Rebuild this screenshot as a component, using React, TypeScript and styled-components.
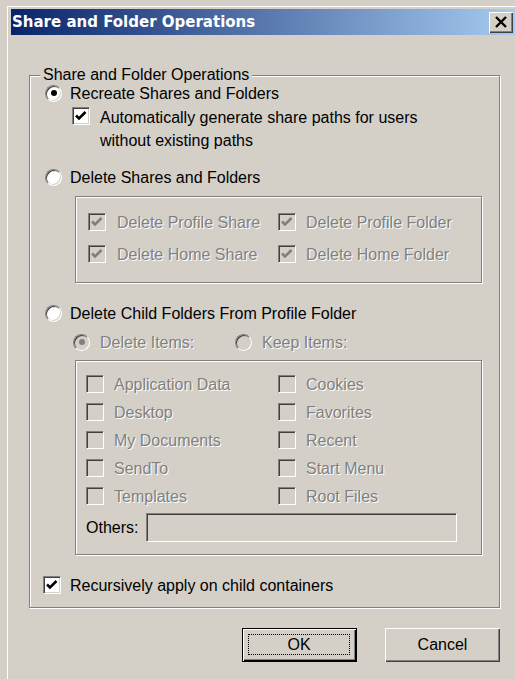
import React from "react";
import styled, { createGlobalStyle } from "styled-components";

const GlobalStyle = createGlobalStyle`
  html, body {
    margin: 0;
    padding: 0;
    background: #d4d0c8;
  }
  body {
    font-family: "Liberation Sans", Arial, sans-serif;
    font-size: 16px;
    color: #000;
  }
`;

const Window = styled.div`
  width: 515px;
  height: 679px;
  overflow: hidden;
  box-sizing: border-box;
  padding: 6px 0 0 7px;
  background: #d4d0c8;
`;

const Frame = styled.div`
  height: 100%;
  box-sizing: border-box;
  border-top: 1px solid #fff;
  border-left: 1px solid #fff;
  padding: 2px 0 0 3px;
`;

const TitleBar = styled.div`
  height: 26px;
  display: flex;
  align-items: center;
  justify-content: space-between;
  padding: 0 2px 0 1px;
  background: linear-gradient(to right, #0a246a, #a6caf0);
`;

const Title = styled.span`
  font-family: "DejaVu Sans", Tahoma, sans-serif;
  font-weight: bold;
  font-size: 15px;
  color: #fff;
`;

const CloseButton = styled.button`
  width: 24px;
  height: 21px;
  padding: 0;
  border: none;
  background: #d4d0c8;
  display: flex;
  align-items: center;
  justify-content: center;
  box-shadow: inset 1px 1px 0 #fff, inset -1px -1px 0 #404040,
    inset -2px -2px 0 #808080;
`;

const Body = styled.div`
  padding: 30px 15px 0 18px;
`;

const Group = styled.fieldset`
  margin: 0;
  padding: 0 0 14px 0;
  min-width: 0;
  border: 1px solid #808080;
  box-shadow: inset 1px 1px 0 #fff, 1px 1px 0 #fff;
`;

const Legend = styled.legend`
  margin-left: 10px;
  padding: 0 3px;
  line-height: 20px;
  background: #d4d0c8;
`;

const Row = styled.div<{ $indent: number; $top: number; $height?: number }>`
  display: flex;
  align-items: center;
  padding-left: ${(p) => p.$indent}px;
  margin-top: ${(p) => p.$top}px;
  height: ${(p) => (p.$height ? `${p.$height}px` : "auto")};
`;

const Option = styled.label<{ $gap: number; $width?: number; $top?: boolean }>`
  display: flex;
  align-items: ${(p) => (p.$top ? "flex-start" : "center")};
  gap: ${(p) => p.$gap}px;
  width: ${(p) => (p.$width ? `${p.$width}px` : "auto")};
  flex-shrink: 0;
`;

const Text = styled.span<{ $disabled?: boolean }>`
  white-space: nowrap;
  padding-top: 1px;
  color: ${(p) => (p.$disabled ? "#808080" : "#000")};
  text-shadow: ${(p) => (p.$disabled ? "1px 1px 0 #fff" : "none")};
`;

const WrapText = styled.span`
  line-height: 23px;
  margin-top: -1px;
`;

const Box = styled.span<{ $disabled?: boolean }>`
  width: 18px;
  height: 18px;
  box-sizing: border-box;
  flex-shrink: 0;
  display: flex;
  align-items: center;
  justify-content: center;
  border-top: 1px solid #808080;
  border-left: 1px solid #808080;
  border-bottom: 1px solid #fff;
  border-right: 1px solid #fff;
  box-shadow: inset 1px 1px 0 #404040, inset -1px -1px 0 #d4d0c8;
  background: ${(p) => (p.$disabled ? "#d4d0c8" : "#fff")};
`;

const Round = styled.span<{ $disabled?: boolean }>`
  width: 17px;
  height: 17px;
  box-sizing: border-box;
  flex-shrink: 0;
  border-radius: 50%;
  display: flex;
  align-items: center;
  justify-content: center;
  border: 1px solid;
  border-color: #808080 #fff #fff #808080;
  box-shadow: inset 1px 1px 0 #404040, inset -1px -1px 0 #d4d0c8;
  background: ${(p) => (p.$disabled ? "#d4d0c8" : "#fff")};
`;

const Dot = styled.span<{ $disabled?: boolean }>`
  width: 6px;
  height: 6px;
  border-radius: 50%;
  background: ${(p) => (p.$disabled ? "#808080" : "#000")};
`;

const Panel = styled.div<{ $height: number; $top: number; $pad: number; $col: number; $row: number }>`
  margin: ${(p) => p.$top}px 0 0 45px;
  width: 407px;
  height: ${(p) => p.$height}px;
  box-sizing: border-box;
  border: 1px solid #808080;
  box-shadow: inset 1px 1px 0 #fff, 1px 1px 0 #fff;
  padding: 9px 0 0 ${(p) => p.$pad}px;
  display: grid;
  grid-template-columns: ${(p) => p.$col}px 1fr;
  grid-auto-rows: ${(p) => p.$row}px;
  align-content: start;
  align-items: center;
`;

const OthersRow = styled.div`
  grid-column: 1 / span 2;
  display: flex;
  align-items: center;
  gap: 8px;
  height: 29px;
  margin-top: 3px;
  align-self: start;
`;

const Field = styled.input`
  width: 311px;
  height: 29px;
  box-sizing: border-box;
  margin: 0;
  border-top: 1px solid #808080;
  border-left: 1px solid #808080;
  border-bottom: 1px solid #fff;
  border-right: 1px solid #fff;
  box-shadow: inset 1px 1px 0 #404040, inset -1px -1px 0 #d4d0c8;
  background: #d4d0c8;
`;

const ButtonRow = styled.div`
  display: flex;
  justify-content: flex-end;
  gap: 28px;
  margin-top: 20px;
`;

const Button = styled.button<{ $default?: boolean }>`
  width: 115px;
  height: 34px;
  padding: 0;
  position: relative;
  font-family: "Liberation Sans", Arial, sans-serif;
  font-size: 16px;
  color: #000;
  background: #d4d0c8;
  border: ${(p) => (p.$default ? "1px solid #000" : "none")};
  box-shadow: ${(p) =>
    p.$default
      ? "inset 1px 1px 0 #fff, inset -1px -1px 0 #000, inset -2px -2px 0 #808080"
      : "inset 1px 1px 0 #fff, inset -1px -1px 0 #404040, inset -2px -2px 0 #808080"};
`;

const FocusRing = styled.span`
  position: absolute;
  inset: 5px 6px 6px 5px;
  border: 1px dotted #000;
  display: flex;
  align-items: center;
  justify-content: center;
`;

const Check = ({ on, disabled }: { on?: boolean; disabled?: boolean }) => (
  <Box $disabled={disabled}>
    {on && (
      <svg width="16" height="16" viewBox="0 0 16 16">
        <polyline
          points="3,7.5 6,10.5 12.5,4"
          fill="none"
          stroke={disabled ? "#808080" : "#000"}
          strokeWidth="2.6"
        />
      </svg>
    )}
  </Box>
);

const Radio = ({ on, disabled }: { on?: boolean; disabled?: boolean }) => (
  <Round $disabled={disabled}>{on && <Dot $disabled={disabled} />}</Round>
);

const folders = [
  ["Application Data", "Cookies"],
  ["Desktop", "Favorites"],
  ["My Documents", "Recent"],
  ["SendTo", "Start Menu"],
  ["Templates", "Root Files"],
];

const App: React.FC = () => (
  <>
    <GlobalStyle />
    <Window>
      <Frame>
        <TitleBar>
          <Title>Share and Folder Operations</Title>
          <CloseButton>
            <svg width="14" height="12" viewBox="0 0 14 12">
              <path d="M2 1 L12 11 M12 1 L2 11" stroke="#000" strokeWidth="2.4" />
            </svg>
          </CloseButton>
        </TitleBar>
        <Body>
          <Group>
            <Legend>Share and Folder Operations</Legend>

            <Row $indent={15} $top={0} $height={16}>
              <Option $gap={8}>
                <Radio on />
                <Text>Recreate Shares and Folders</Text>
              </Option>
            </Row>

            <Row $indent={42} $top={5} $height={46}>
              <Option $gap={10} $top>
                <Check on />
                <WrapText>
                  Automatically generate share paths for users
                  <br />
                  without existing paths
                </WrapText>
              </Option>
            </Row>

            <Row $indent={15} $top={17} $height={16}>
              <Option $gap={8}>
                <Radio />
                <Text>Delete Shares and Folders</Text>
              </Option>
            </Row>

            <Panel $height={87} $top={11} $pad={12} $col={190} $row={32}>
              <Option $gap={11}>
                <Check on disabled />
                <Text $disabled>Delete Profile Share</Text>
              </Option>
              <Option $gap={10}>
                <Check on disabled />
                <Text $disabled>Delete Profile Folder</Text>
              </Option>
              <Option $gap={11}>
                <Check on disabled />
                <Text $disabled>Delete Home Share</Text>
              </Option>
              <Option $gap={10}>
                <Check on disabled />
                <Text $disabled>Delete Home Folder</Text>
              </Option>
            </Panel>

            <Row $indent={15} $top={22} $height={16}>
              <Option $gap={8}>
                <Radio />
                <Text>Delete Child Folders From Profile Folder</Text>
              </Option>
            </Row>

            <Row $indent={43} $top={13} $height={16}>
              <Option $gap={10} $width={162}>
                <Radio on disabled />
                <Text $disabled>Delete Items:</Text>
              </Option>
              <Option $gap={10}>
                <Radio disabled />
                <Text $disabled>Keep Items:</Text>
              </Option>
            </Row>

            <Panel $height={195} $top={10} $pad={10} $col={192} $row={28}>
              {folders.flat().map((name) => (
                <Option key={name} $gap={10}>
                  <Check disabled />
                  <Text $disabled>{name}</Text>
                </Option>
              ))}
              <OthersRow>
                <Text>Others:</Text>
                <Field disabled />
              </OthersRow>
            </Panel>

            <Row $indent={13} $top={22} $height={16}>
              <Option $gap={9}>
                <Check on />
                <Text>Recursively apply on child containers</Text>
              </Option>
            </Row>
          </Group>

          <ButtonRow>
            <Button $default>
              <FocusRing>OK</FocusRing>
            </Button>
            <Button>Cancel</Button>
          </ButtonRow>
        </Body>
      </Frame>
    </Window>
  </>
);

export default App;
